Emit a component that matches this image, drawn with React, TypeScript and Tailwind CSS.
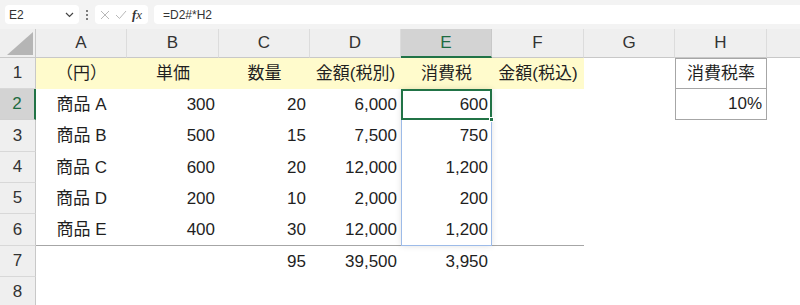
import React from "react";

const COLS = ["A", "B", "C", "D", "E", "F", "G", "H", ""];
const ROW_H = ["h-[31px]", "h-[31px]", "h-[32px]", "h-[31px]", "h-[31px]", "h-[32px]", "h-[31px]", "h-[31px]"];

type C = { t: string; a?: "l" | "c" | "r" };

const data: C[][] = [
  [
    { t: "（円）", a: "c" },
    { t: "単価", a: "c" },
    { t: "数量", a: "c" },
    { t: "金額(税別)", a: "c" },
    { t: "消費税", a: "c" },
    { t: "金額(税込)", a: "c" },
    { t: "" },
    { t: "消費税率", a: "c" },
    { t: "" },
  ],
  [{ t: "商品 A", a: "c" }, { t: "300", a: "r" }, { t: "20", a: "r" }, { t: "6,000", a: "r" }, { t: "600", a: "r" }, { t: "" }, { t: "" }, { t: "10%", a: "r" }, { t: "" }],
  [{ t: "商品 B", a: "c" }, { t: "500", a: "r" }, { t: "15", a: "r" }, { t: "7,500", a: "r" }, { t: "750", a: "r" }, { t: "" }, { t: "" }, { t: "" }, { t: "" }],
  [{ t: "商品 C", a: "c" }, { t: "600", a: "r" }, { t: "20", a: "r" }, { t: "12,000", a: "r" }, { t: "1,200", a: "r" }, { t: "" }, { t: "" }, { t: "" }, { t: "" }],
  [{ t: "商品 D", a: "c" }, { t: "200", a: "r" }, { t: "10", a: "r" }, { t: "2,000", a: "r" }, { t: "200", a: "r" }, { t: "" }, { t: "" }, { t: "" }, { t: "" }],
  [{ t: "商品 E", a: "c" }, { t: "400", a: "r" }, { t: "30", a: "r" }, { t: "12,000", a: "r" }, { t: "1,200", a: "r" }, { t: "" }, { t: "" }, { t: "" }, { t: "" }],
  [{ t: "" }, { t: "" }, { t: "95", a: "r" }, { t: "39,500", a: "r" }, { t: "3,950", a: "r" }, { t: "" }, { t: "" }, { t: "" }, { t: "" }],
  [{ t: "" }, { t: "" }, { t: "" }, { t: "" }, { t: "" }, { t: "" }, { t: "" }, { t: "" }, { t: "" }],
];

function cellClass(r: number, c: number): string {
  const parts: string[] = [];
  if (r === 0 && c <= 5) parts.push("bg-[#fffbcc]");
  else parts.push("bg-white");
  if (r === 5 && c <= 5) parts.push("border-b border-[#a6a6a6]");
  if (c === 7 && (r === 0 || r === 1)) parts.push("border border-[#a6a6a6]");
  if (c === 7 && r === 1) parts.push("border-t-0");
  return parts.join(" ");
}

function alignClass(a?: "l" | "c" | "r") {
  if (a === "c") return "justify-center";
  if (a === "r") return "justify-end pr-[4px]";
  return "justify-start pl-[4px]";
}

export default function App() {
  return (
    <div
      className="w-[800px] h-[305px] overflow-hidden bg-white text-[#1f1f1f]"
      style={{ fontFamily: "'Liberation Sans', 'Noto Sans CJK JP', sans-serif" }}
    >
      {/* Formula bar */}
      <div className="h-[29px] bg-[#f3f3f3] flex items-center pl-[5px] pr-0 gap-[6px]">
        <div className="w-[74px] h-[19px] bg-white rounded-[4px] flex items-center justify-between pl-[4px] pr-[4px] text-[12px] text-[#333]">
          <span>E2</span>
          <svg width="9" height="6" viewBox="0 0 9 6" className="mr-[1px]">
            <path d="M1 1 L4.5 4.5 L8 1" fill="none" stroke="#444" strokeWidth="1.2" />
          </svg>
        </div>
        <div className="flex flex-col gap-[2px] items-center w-[4px]">
          <span className="w-[2px] h-[2px] bg-[#555] rounded-full"></span>
          <span className="w-[2px] h-[2px] bg-[#555] rounded-full"></span>
          <span className="w-[2px] h-[2px] bg-[#555] rounded-full"></span>
        </div>
        <div className="w-[53px] h-[19px] bg-white rounded-[4px] flex items-center gap-[5px] pl-[5px]">
          <svg width="10" height="10" viewBox="0 0 10 10">
            <path d="M1 1 L9 9 M9 1 L1 9" stroke="#b8b8b8" strokeWidth="1" fill="none" />
          </svg>
          <svg width="12" height="10" viewBox="0 0 12 10">
            <path d="M1 5 L4.5 8.5 L11 1" stroke="#b8b8b8" strokeWidth="1" fill="none" />
          </svg>
          <span
            className="text-[13px] italic text-[#333] leading-none"
            style={{ fontFamily: "'Liberation Serif', serif" }}
          >
            <span className="font-bold">f</span>x
          </span>
        </div>
        <div className="flex-1 h-[19px] bg-white rounded-l-[4px] flex items-center pl-[9px] text-[12px] text-[#333]">
          =D2#*H2
        </div>
      </div>

      {/* Sheet grid */}
      <div className="grid w-[860px] grid-cols-[36px_91px_92px_91px_91px_91px_92px_91px_92px_93px]">
        {/* Column header row */}
        <div className="h-[29px] bg-[#efefef] border-r border-b border-[#c8c8c8] relative overflow-hidden">
          <div className="absolute right-[2px] bottom-[2px] w-0 h-0 border-l-[26px] border-l-transparent border-b-[23px] border-b-[#b5b5b5]"></div>
        </div>
        {COLS.map((c, i) =>
          c === "E" ? (
            <div
              key={i}
              className="h-[29px] bg-[#d3d3d3] border-r border-[#c8c8c8] border-b-2 border-b-[#217346] flex items-center justify-center text-[17px] text-[#1e6b41]"
            >
              {c}
            </div>
          ) : (
            <div
              key={i}
              className="h-[29px] bg-[#efefef] border-r border-b border-r-[#dcdcdc] border-b-[#c8c8c8] flex items-center justify-center text-[17px] text-[#333]"
            >
              {c}
            </div>
          )
        )}

        {data.map((row, r) => (
          <React.Fragment key={r}>
            {r === 1 ? (
              <div
                className={`${ROW_H[r]} bg-[#d3d3d3] border-b border-b-[#d0d0d0] border-r-2 border-r-[#217346] flex items-center justify-center text-[17px] text-[#1e6b41]`}
              >
                {r + 1}
              </div>
            ) : (
              <div
                className={`${ROW_H[r]} bg-[#efefef] border-b border-b-[#d8d8d8] border-r border-r-[#c8c8c8] flex items-center justify-center text-[17px] text-[#333]`}
              >
                {r + 1}
              </div>
            )}
            {row.map((cell, c) => (
              <div
                key={c}
                className={`${ROW_H[r]} ${cellClass(r, c)} flex items-center ${alignClass(cell.a)} text-[17px] whitespace-nowrap ${
                  r === 1 && c === 4 ? "relative" : ""
                }`}
              >
                {r === 1 && c === 4 && (
                  <>
                    <div className="absolute left-0 top-0 w-[91px] h-[157px] border border-[#9dbbe8] shadow-[0_0_6px_rgba(0,0,0,0.12)] pointer-events-none"></div>
                    <div className="absolute left-0 top-0 w-[91px] h-[31px] border-2 border-[#217346] pointer-events-none"></div>
                    <div className="absolute right-[-2px] bottom-[-2px] w-[5px] h-[5px] bg-[#217346] border border-white pointer-events-none"></div>
                  </>
                )}
                <span className="relative">{cell.t}</span>
              </div>
            ))}
          </React.Fragment>
        ))}
      </div>
    </div>
  );
}
